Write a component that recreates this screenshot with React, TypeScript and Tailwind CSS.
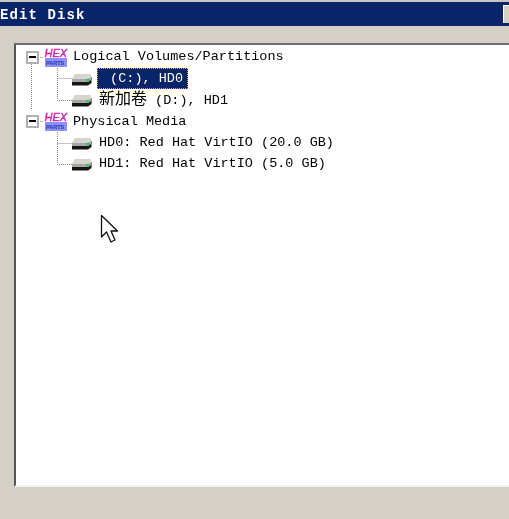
import type { ReactNode } from "react";

const HexIcon = () => (
  <svg width="24" height="22" viewBox="0 0 24 22" className="shrink-0">
    <text x="0.5" y="10.5" fontFamily="Liberation Sans, sans-serif" fontSize="11" fontWeight="400" fontStyle="italic" stroke="#d020b8" strokeWidth="0.4" fill="#d020b8">HEX</text>
    <rect x="1" y="12" width="22" height="9" fill="#8f90fa" />
    <text x="2" y="18.5" fontFamily="Liberation Sans, sans-serif" fontSize="5.5" fontWeight="700" fill="#1f35a8">PARTS</text>
  </svg>
);

const DiskIcon = () => (
  <svg width="21" height="14" viewBox="0 0 21 14" className="shrink-0">
    <path d="M4 2 H20 V5 L17 7 H1 Z" fill="#d4d4d0" />
    <path d="M1 7 H17 L20 5 V8 L17 10 H1 Z" fill="#a8a8a4" />
    <path d="M1 10 H17 L20 8 V5 L20.5 5 V11 L17 13.5 H1 Z" fill="#161616" />
    <rect x="15" y="7" width="3" height="2" fill="#22cc44" />
  </svg>
);

const Expander = () => (
  <div className="w-[13px] h-[13px] border-2 border-[#b0b0b0] bg-white flex items-center justify-center shrink-0">
    <div className="w-[7px] h-[2px] bg-black" />
  </div>
);

const labelClass = "whitespace-pre text-[13.5px] leading-none text-black";

const Root = ({ label }: { label: string }) => (
  <div className="flex items-center h-[21.4px] pl-[10px]">
    <Expander />
    <div className="w-[5px]" />
    <HexIcon />
    <span className={`${labelClass} ml-[5px]`}>{label}</span>
  </div>
);

const Child = ({ label, selected }: { label: ReactNode; selected?: boolean }) => (
  <div className="flex items-center h-[21.4px] pl-[55px]">
    <DiskIcon />
    {selected ? (
      <span className="whitespace-pre text-[13.5px] leading-none ml-[5px] bg-[#0a246a] text-white px-[4px] h-[21px] flex items-center border border-dotted border-[#d8b040]">{label}</span>
    ) : (
      <span className={`${labelClass} ml-[7px]`}>{label}</span>
    )}
  </div>
);

export default function App() {
  const mono = { fontFamily: '"Liberation Mono", "Noto Sans CJK SC", monospace' };
  return (
    <div className="w-[509px] h-[519px] bg-[#d4d0c8] flex flex-col overflow-hidden relative blur-[0.3px]" style={mono}>
      <div className="h-[2px] bg-[#c8c6c0]" />
      <div className="h-[24px] bg-[#0a246a] flex items-center justify-between">
        <span className="text-white font-bold text-[14px] tracking-[1.1px] whitespace-pre leading-none translate-y-[1px]">Edit Disk</span>
        <div className="w-[6px] h-[18px] bg-[#d4d0c8] border-l border-t border-white" />
      </div>
      <div className="flex-1 pl-[14px] pt-[17px] pb-[32px]">
        <div className="h-full bg-white border-l-2 border-t-2 border-b-2 border-l-[#555555] border-t-[#707070] border-b-[#f4f2ee] relative">
          <svg className="absolute left-0 top-0" width="80" height="140" fill="none" stroke="#888888" strokeDasharray="1 1">
            <path d="M15.5 19 V65 M22 12.5 H28 M41.5 21 V55.5 H56 M41.5 33.5 H56" />
            <path d="M22 76.5 H28 M41.5 85 V119.5 H56 M41.5 98.5 H56" />
          </svg>
          <div className="relative pt-[1.5px]">
            <Root label="Logical Volumes/Partitions" />
            <Child label=" (C:), HD0" selected />
            <Child label={<><span className="text-[16px] leading-none">新加卷</span> (D:), HD1</>} />
            <Root label="Physical Media" />
            <Child label="HD0: Red Hat VirtIO (20.0 GB)" />
            <Child label="HD1: Red Hat VirtIO (5.0 GB)" />
          </div>
        </div>
      </div>
      <svg className="absolute left-[100px] top-[214px]" width="20" height="32" viewBox="0 0 20 32">
        <path d="M1.5 1.5 V23 L6.5 18 L11 28 L15 26 L11 17 H17.5 Z" fill="#ffffff" stroke="#111111" strokeWidth="1.3" strokeLinejoin="round" />
      </svg>
    </div>
  );
}
